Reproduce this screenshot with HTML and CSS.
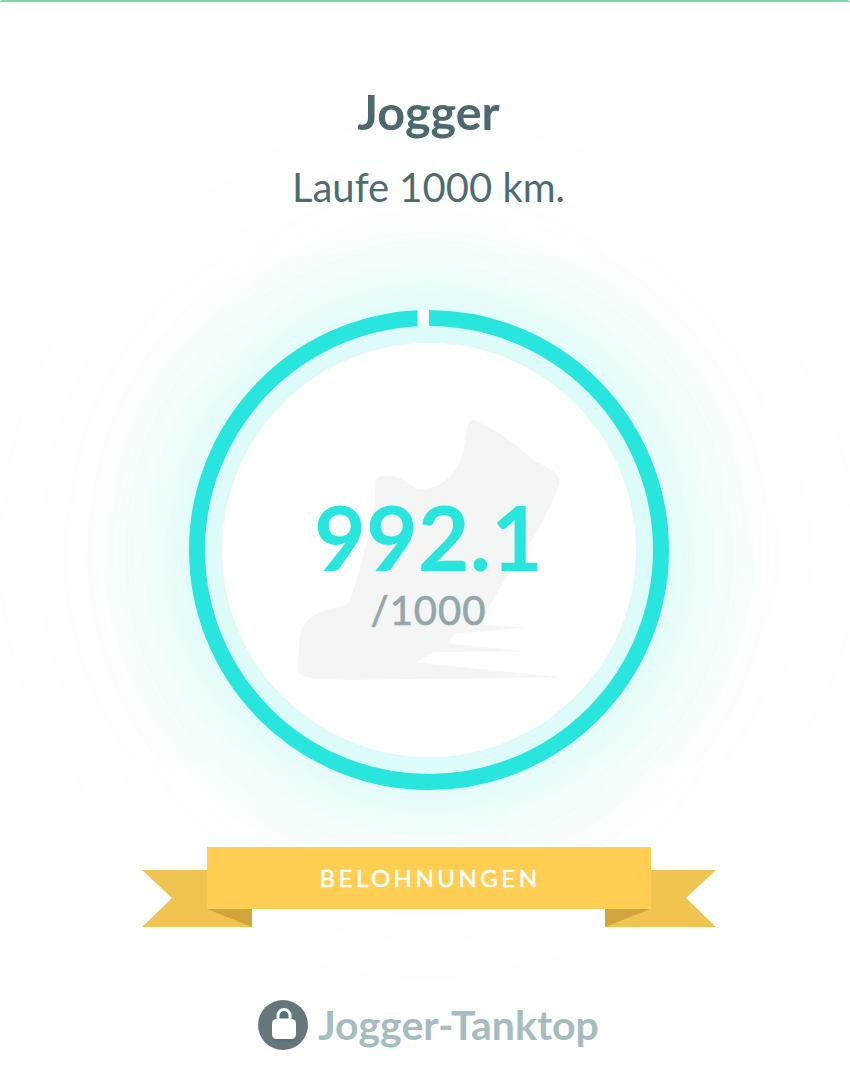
FILE: index.html
```html
<!DOCTYPE html>
<html lang="de">
<head>
<meta charset="utf-8">
<title>Jogger</title>
<link rel="stylesheet" href="styles.css">
</head>
<body>
<main class="page">
  <h1 class="title">Jogger</h1>
  <p class="subtitle">Laufe 1000 km.</p>
  <section class="gauge">
    <svg class="ring" viewBox="0 0 480 480" aria-hidden="true">
      <circle class="ring-track" cx="240" cy="240" r="216"/>
      <circle class="ring-value" cx="240" cy="240" r="232"/>
      <rect class="ring-gap" x="228.500" y="0" width="11.500" height="12"/>
      <rect class="ring-gap-low" x="228.500" y="12" width="11.500" height="5"/>
    </svg>
    <svg class="shoe" viewBox="0 0 900 900" aria-hidden="true">
      <path d="M575 57C610 62 700 120 760 180C800 195 838 215 838 248C825 290 760 420 700 500C665 545 630 610 600 672L725 680L525 697L500 728L720 750L460 752L405 785L830 828L200 836C150 836 90 832 70 826C55 820 52 805 55 780L60 705C65 670 90 645 130 630C160 620 190 618 205 608C235 540 270 400 285 300L288 238C295 222 330 220 365 235L410 265C470 268 520 235 545 170C560 130 555 70 575 57Z"/>
    </svg>
    <div class="reading">
      <div class="value">992.1</div>
      <div class="goal">/1000</div>
    </div>
  </section>
  <div class="ribbon">
    <svg class="ribbon-art" viewBox="0 0 574 80" aria-hidden="true">
      <path class="tail" d="M0 23H110V80H0L30 51Z"/>
      <path class="tail" d="M574 23H463V80H574L544 51Z"/>
      <path class="fold" d="M65 62H110V80Z"/>
      <path class="fold" d="M508 62H463V80Z"/>
    </svg>
    <div class="band">BELOHNUNGEN</div>
  </div>
  <div class="reward">
    <span class="lock">
      <svg viewBox="0 0 50 50" aria-hidden="true">
        <circle class="lock-bg" cx="25" cy="25" r="25"/>
        <path class="lock-shackle" d="M20 20V15.500a6 6 0 0 1 12 0V20Z"/>
        <rect class="lock-shade" x="16.500" y="33" width="19" height="8.500" rx="3.500"/>
        <rect class="lock-base" x="14" y="19" width="24" height="20" rx="4.500"/>
      </svg>
    </span>
    <span class="reward-name">Jogger-Tanktop</span>
  </div>
</main>
</body>
</html>
```
FILE: styles.css
```css
* { box-sizing: border-box; }
html, body { margin: 0; background: #fff; }
body { font-family: "Lato", "Open Sans", sans-serif; }
.page {
  width: 850px;
  height: 1080px;
  overflow: hidden;
  border-top: 2px solid #7fd6ae;
  border-radius: 3px 3px 0 0;
  padding: 82px 0 0 7px;
  display: flex;
  flex-direction: column;
  align-items: center;
}
.title {
  margin: 0;
  font-size: 48.500px;
  line-height: 54px;
  font-weight: 700;
  color: #4c6a6e;
}
.subtitle {
  margin: 27px 0 0;
  font-size: 40px;
  line-height: 44px;
  font-weight: 400;
  color: #4f6d71;
  position: relative;
  z-index: 1;
}
.gauge {
  margin-top: 101px;
  width: 480px;
  height: 480px;
  flex: none;
  border-radius: 50%;
  position: relative;
  display: flex;
  flex-direction: column;
  align-items: center;
  box-shadow: 0 0 100px 8px rgba(40, 230, 222, .18), 0 0 190px 70px rgba(40, 230, 222, .05);
}
.ring { position: absolute; inset: 0; width: 480px; height: 480px; }
.ring-track { fill: #fff; stroke: #ddfbf9; stroke-width: 18; }
.ring-value { fill: none; stroke: #28e6de; stroke-width: 16; }
.ring-gap { fill: #fff; }
.ring-gap-low { fill: #eafdfc; }
.shoe { position: absolute; left: 91px; top: 91px; width: 300px; height: 300px; }
.shoe path { fill: #f4f6f5; stroke: #f4f6f5; stroke-width: 2; stroke-linejoin: round; }
.reading {
  position: relative;
  margin-top: 177px;
  display: flex;
  flex-direction: column;
  align-items: center;
}
.value {
  font-size: 89.500px;
  line-height: 100px;
  font-weight: 700;
  color: #28e6de;
}
.goal {
  font-size: 40px;
  line-height: 46px;
  font-weight: 400;
  -webkit-text-stroke: .7px #93a8ab;
  letter-spacing: 1px;
  color: #93a8ab;
}
.ribbon {
  margin-top: 57px;
  width: 574px;
  height: 80px;
  flex: none;
  position: relative;
  display: flex;
  justify-content: center;
}
.ribbon-art { position: absolute; inset: 0; width: 574px; height: 80px; }
.tail { fill: #f0c450; }
.fold { fill: #cfa53c; }
.band {
  position: relative;
  width: 444px;
  height: 62px;
  padding-left: 3px;
  background: #ffce52;
  color: #fff;
  font-size: 24px;
  line-height: 62px;
  font-weight: 400;
  -webkit-text-stroke: .5px #fff;
  letter-spacing: 3.500px;
  text-align: center;
}
.reward {
  margin-top: 73px;
  display: flex;
  align-items: center;
  gap: 10px;
}
.lock { width: 50px; height: 50px; flex: none; display: block; }
.lock svg { display: block; width: 50px; height: 50px; }
.lock-bg { fill: #65777b; }
.lock-shackle { fill: #4f7376; stroke: #fff; stroke-width: 3; }
.lock-base { fill: #fff; }
.lock-shade { fill: #4f7376; }
.reward-name {
  font-size: 41px;
  line-height: 50px;
  font-weight: 700;
  color: #a6bcbe;
}
```
